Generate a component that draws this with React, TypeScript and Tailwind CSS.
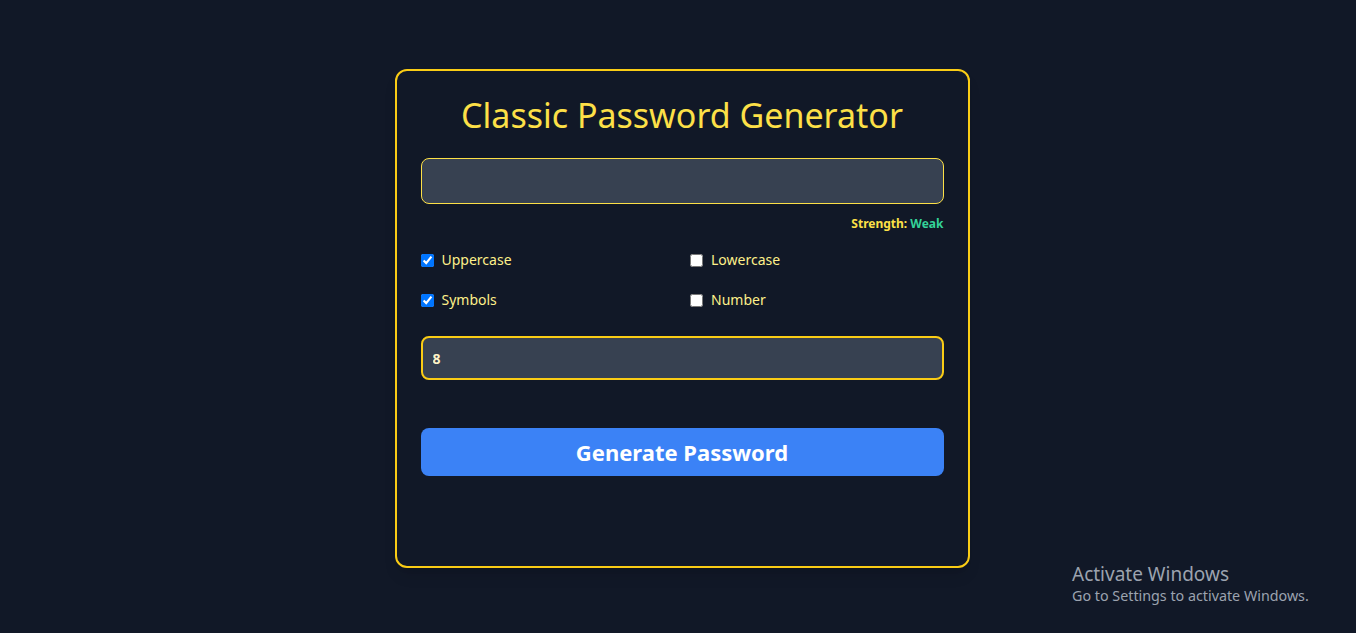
import React, { useState } from "react"

const font = { fontFamily: '"Noto Sans", "Open Sans", sans-serif' }

const options = [
  { id: "upper", label: "Uppercase", checked: true },
  { id: "lower", label: "Lowercase", checked: false },
  { id: "symbols", label: "Symbols", checked: true },
  { id: "number", label: "Number", checked: false },
]

const App = () => {
  const [length, setLength] = useState("8")
  const [checks, setChecks] = useState(options.map((o) => o.checked))

  return (
    <div
      className="min-h-screen w-full bg-[#111827] flex items-center justify-center relative"
      style={font}>
      <div className="ml-2 mt-1 w-[575px] h-[499px] border-2 border-[#facc15] rounded-xl p-6 shadow-lg flex flex-col">
        <h1 className="text-[34px] leading-10 text-center text-[#fde047]">
          Classic Password Generator
        </h1>

        <input
          readOnly
          className="mt-[23px] h-[46px] w-full rounded-lg bg-[#374151] border border-[#fde047] px-3 text-white outline-none"
        />

        <div className="mt-3 text-right text-xs font-bold text-[#fde047]">
          Strength: <span className="text-[#34d399]">Weak</span>
        </div>

        <div className="mt-[18px] grid grid-cols-2 gap-x-4 gap-y-5">
          {options.map((o, i) => (
            <label key={o.id} className="flex items-center gap-2 text-sm leading-5 text-[#fef08a]">
              <input
                type="checkbox"
                checked={checks[i]}
                onChange={() => setChecks(checks.map((c, j) => (j === i ? !c : c)))}
                className="w-[13px] h-[13px]"
              />
              {o.label}
            </label>
          ))}
        </div>

        <input
          value={length}
          onChange={(e) => setLength(e.target.value)}
          className="mt-[26px] h-[44px] w-full rounded-lg bg-[#374151] border-2 border-[#facc15] px-2.5 text-sm font-bold text-[#fef3c7] outline-none"
        />

        <button className="mt-[48px] h-[48px] w-full rounded-lg bg-[#3b82f6] text-white text-[22px] font-bold">
          Generate Password
        </button>
      </div>

      <div className="absolute left-[1072px] top-[562px] text-[#9ca3af]">
        <div className="text-[19px] leading-6">Activate Windows</div>
        <div className="text-[14.3px] leading-5">Go to Settings to activate Windows.</div>
      </div>
    </div>
  )
}

export default App
